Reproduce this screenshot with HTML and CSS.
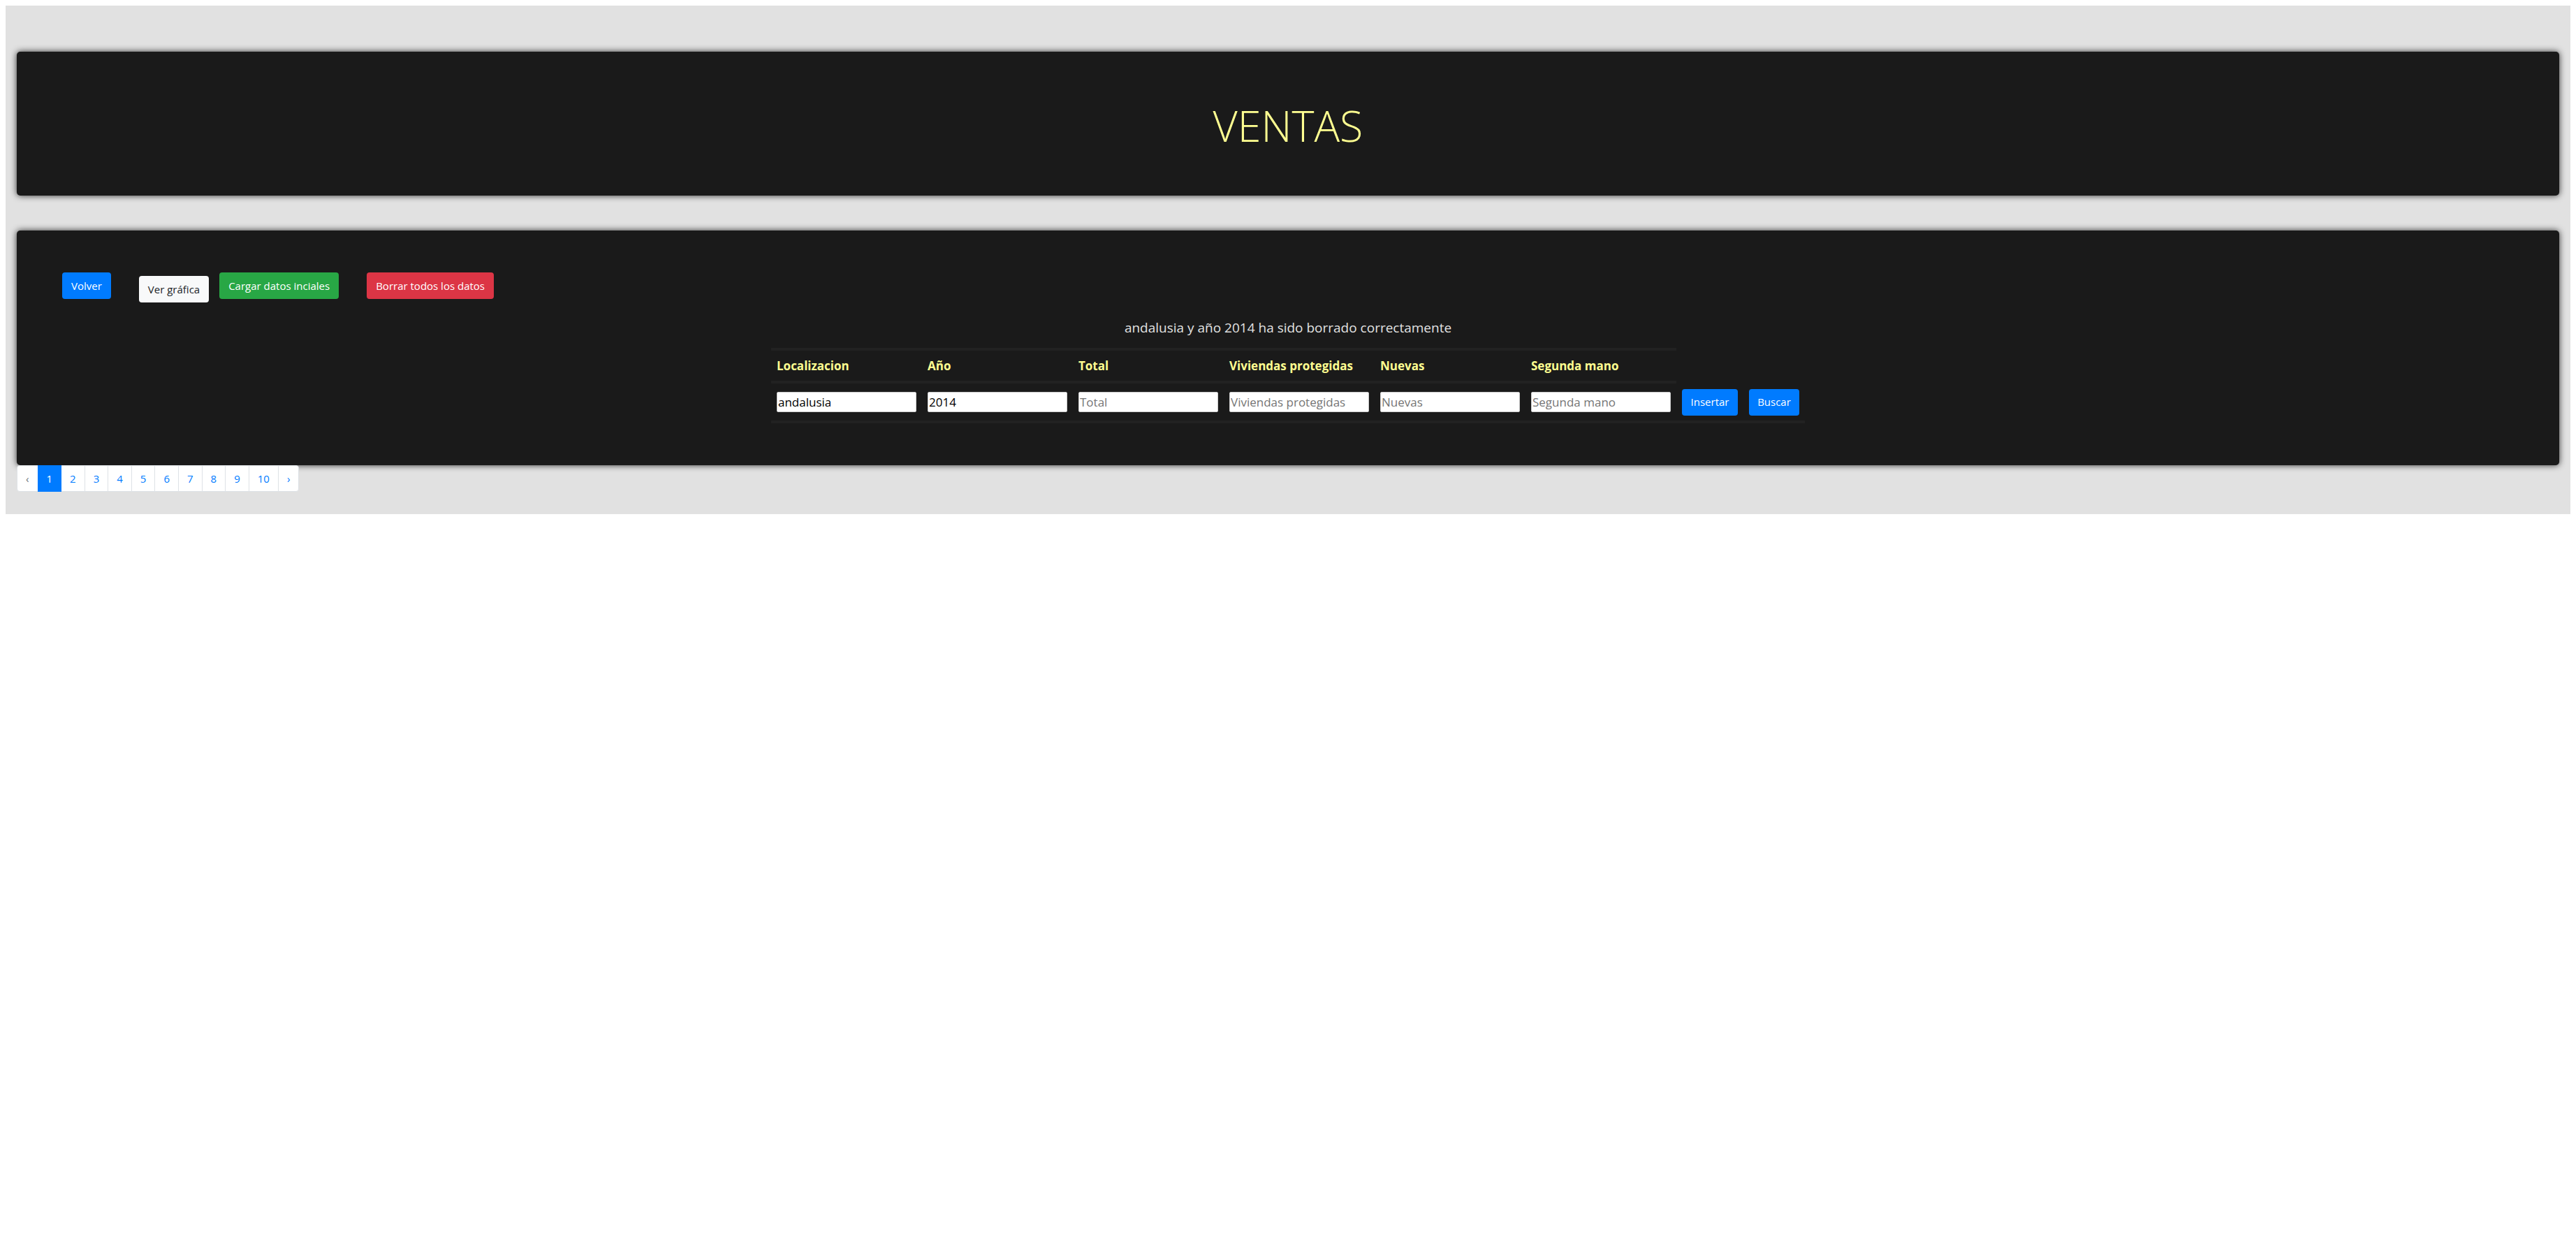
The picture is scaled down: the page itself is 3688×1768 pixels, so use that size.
FILE: index.html
```html
<!DOCTYPE html>
<html lang="es">
<head>
<meta charset="utf-8">
<title>Ventas</title>
<link rel="stylesheet" href="styles.css">
</head>
<body>
<div class="page">
  <header class="card banner"><h1 class="title">VENTAS</h1></header>
  <main class="card panel">
    <div class="toolbar">
      <button type="button" class="btn primary">Volver</button>
      <div class="group">
        <button type="button" class="btn light">Ver gráfica</button>
        <button type="button" class="btn success">Cargar datos inciales</button>
      </div>
      <button type="button" class="btn danger">Borrar todos los datos</button>
    </div>
    <p class="message">andalusia y año 2014 ha sido borrado correctamente</p>
    <table class="sales">
      <thead>
        <tr>
          <th id="loc">Localizacion</th>
          <th id="year">Año</th>
          <th id="total">Total</th>
          <th id="protected">Viviendas protegidas</th>
          <th id="new">Nuevas</th>
          <th id="used">Segunda mano</th>
        </tr>
      </thead>
      <tbody>
        <tr>
          <td><input class="field" type="text" aria-labelledby="loc" value="andalusia"></td>
          <td><input class="field" type="text" aria-labelledby="year" value="2014"></td>
          <td><input class="field" type="text" aria-labelledby="total" placeholder="Total"></td>
          <td><input class="field" type="text" aria-labelledby="protected" placeholder="Viviendas protegidas"></td>
          <td><input class="field" type="text" aria-labelledby="new" placeholder="Nuevas"></td>
          <td><input class="field" type="text" aria-labelledby="used" placeholder="Segunda mano"></td>
          <td><button type="button" class="btn primary insert">Insertar</button></td>
          <td><button type="button" class="btn primary search">Buscar</button></td>
        </tr>
      </tbody>
    </table>
  </main>
  <nav aria-label="Paginación">
    <ul class="pagination">
      <li><a class="page-link disabled" href="#">‹</a></li>
      <li><a class="page-link active" href="#" aria-current="page">1</a></li>
      <li><a class="page-link" href="#">2</a></li>
      <li><a class="page-link" href="#">3</a></li>
      <li><a class="page-link" href="#">4</a></li>
      <li><a class="page-link" href="#">5</a></li>
      <li><a class="page-link" href="#">6</a></li>
      <li><a class="page-link" href="#">7</a></li>
      <li><a class="page-link" href="#">8</a></li>
      <li><a class="page-link" href="#">9</a></li>
      <li><a class="page-link" href="#">10</a></li>
      <li><a class="page-link" href="#">›</a></li>
    </ul>
  </nav>
</div>
</body>
</html>
```
FILE: styles.css
```css
* { box-sizing: border-box; }

body {
  margin: 8px;
  background: #fff;
  font-family: "Segoe UI", "Open Sans", "Noto Sans", sans-serif;
  font-size: 15px;
  line-height: 24px;
}

.page {
  padding: 66px 16px 32px;
  background: #e1e1e1;
}

.card {
  border-radius: 5px;
  background: #1a1a1a;
  box-shadow: 0 0 10px rgba(0, 0, 0, 0.8);
}

.banner {
  margin-bottom: 50px;
  padding: 58px 64px 52px;
}

.title {
  margin: 0;
  color: #ffff91;
  font-size: 61px;
  font-weight: 300;
  line-height: 96px;
  text-align: center;
}

.panel { padding: 60px 65px; }

.toolbar {
  display: flex;
  align-items: flex-start;
  gap: 40px;
}

.group {
  display: flex;
  align-items: flex-start;
  gap: 15px;
}

.btn {
  height: 38px;
  padding: 0 12px;
  border: 1px solid transparent;
  border-radius: 4px;
  color: #fff;
  font: inherit;
  white-space: nowrap;
  cursor: pointer;
}

.primary { background: #007bff; }
.success { background: #28a745; }
.danger { background: #dc3545; }
.light {
  margin-top: 5px;
  background: #f8f9fa;
  color: #212529;
}

.message {
  margin: 21px 0 13px;
  color: #e1e1e1;
  font-size: 19px;
  line-height: 31px;
  text-align: center;
}

.sales {
  margin: 0 auto;
  border-spacing: 0;
  color: #ffff91;
  font-size: 17px;
  line-height: 27px;
}

.sales th {
  padding: 8px;
  border: solid #222;
  border-width: 4px 0;
  font-weight: 700;
  text-align: left;
  white-space: nowrap;
}

.sales td {
  height: 57px;
  padding: 0 8px;
  border-bottom: 4px solid #222;
}

.field {
  display: block;
  width: 200px;
  height: 29px;
  padding: 0 1px;
  border: 1px solid #ccc;
  border-radius: 2px;
  background: #fff;
  color: #000;
  font: inherit;
}

.field::placeholder { color: #757575; }

.sales .btn {
  display: block;
  padding: 0;
  font-size: 15px;
}

.insert { width: 80px; }
.search { width: 72px; }

.pagination {
  display: flex;
  position: relative;
  margin: 0;
  padding: 0 0 0 1px;
  list-style: none;
}

.page-link {
  display: block;
  position: relative;
  margin-left: -1px;
  padding: 6px 12px;
  border: 1px solid #dee2e6;
  background: #fff;
  color: #007bff;
  text-decoration: none;
}

li:first-child .page-link { border-radius: 4px 0 0 4px; }
li:last-child .page-link { border-radius: 0 4px 4px 0; }

.page-link.disabled { color: #6c757d; }

.page-link.active {
  z-index: 1;
  border-color: #007bff;
  background: #007bff;
  color: #fff;
}
```
